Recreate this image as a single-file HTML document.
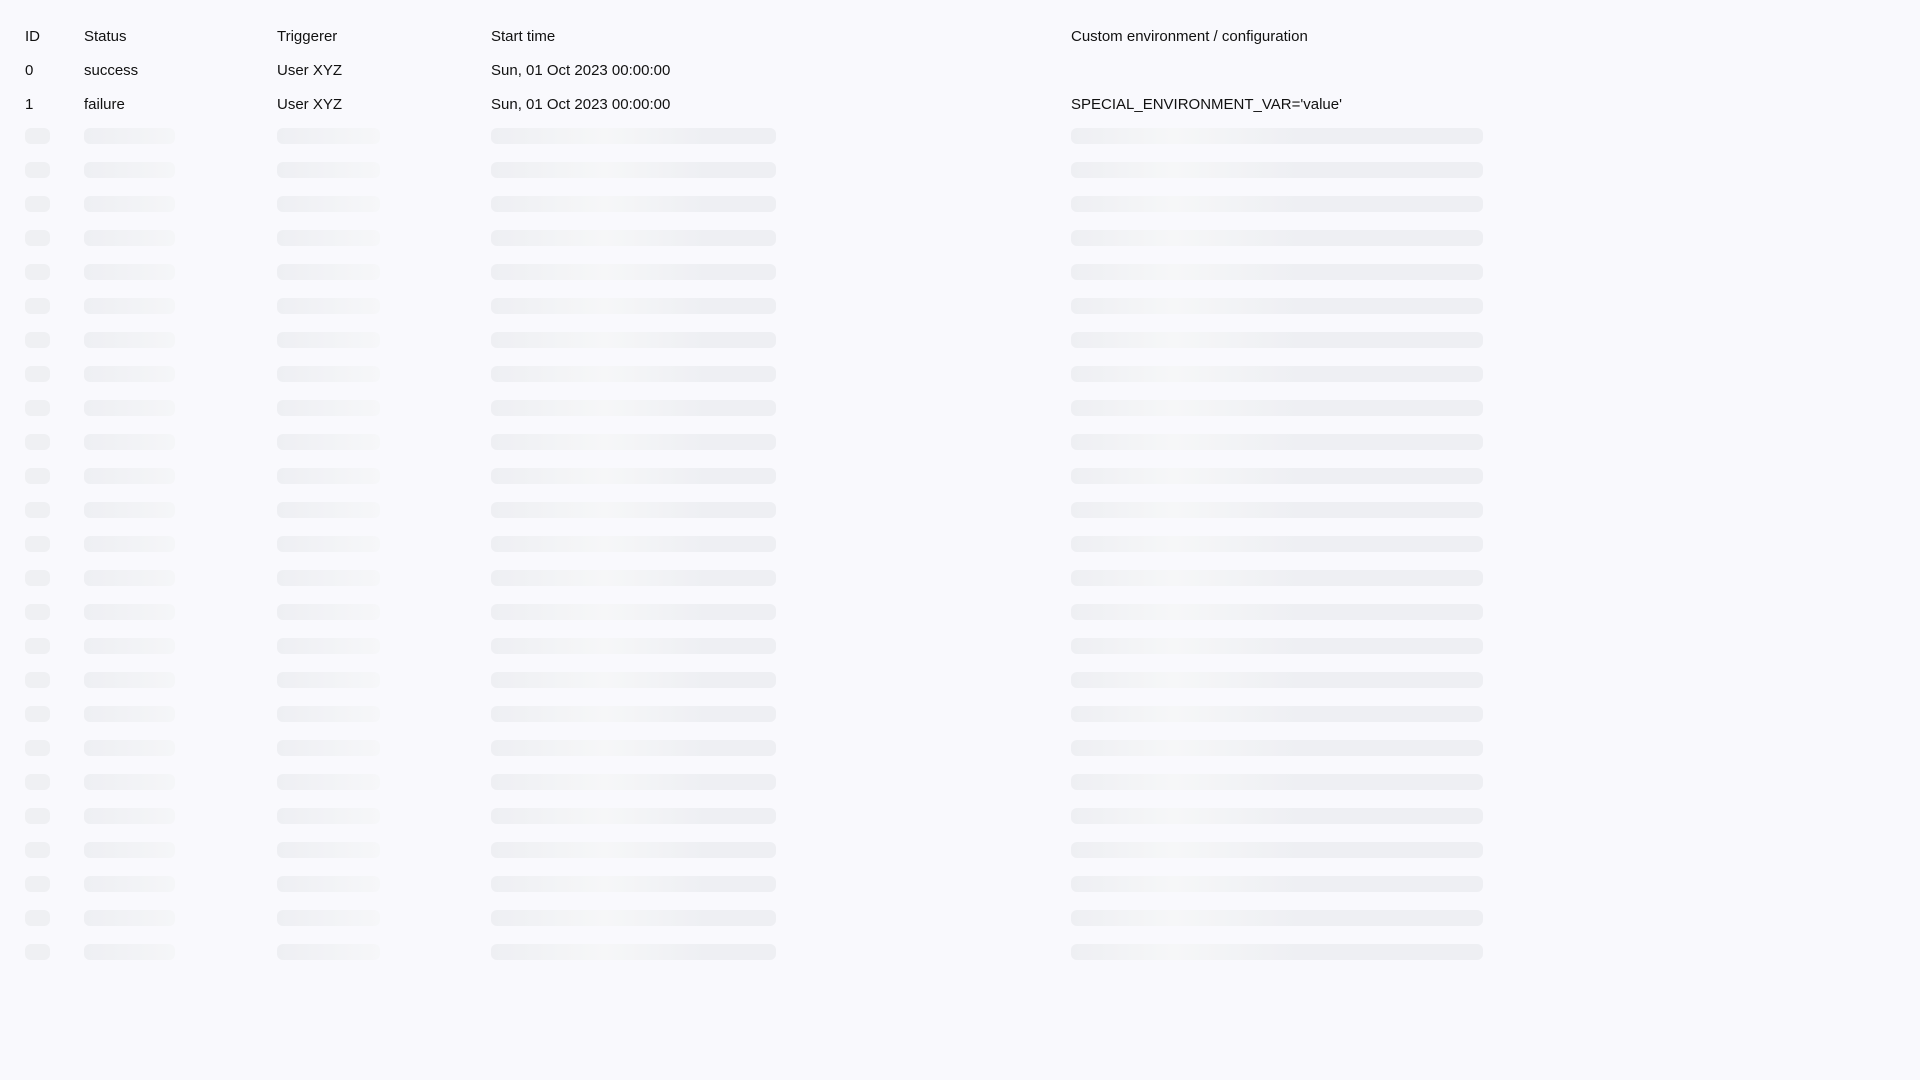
<!DOCTYPE html>
<html><head><style>
html,body{margin:0;padding:0;width:1920px;height:1080px;background:#f9f9fd;overflow:hidden}
body{font-family:"Liberation Sans",sans-serif;font-size:15px;color:#111}
.t{position:absolute;white-space:nowrap;line-height:20px}
.b{position:absolute;height:16px;border-radius:6px}
.c0{left:25px;width:25px;background:#eff0f3}
.c1{left:84px;width:91px;background:linear-gradient(90deg,#eeeff3,#f5f6f8)}
.c2{left:277px;width:103px;background:linear-gradient(90deg,#eeeff3,#f6f7f9)}
.c3{left:491px;width:285px;background:linear-gradient(90deg,#eeeff3 0%,#f6f7f8 40%,#eeeff3 75%,#eeeff3 100%)}
.c4{left:1071px;width:412px;background:linear-gradient(90deg,#eeeff3 0%,#f6f7f8 25%,#eeeff3 55%,#eeeff3 100%)}
</style></head><body>
<div class="t" style="left:25px;top:27px">ID</div>
<div class="t" style="left:84px;top:27px">Status</div>
<div class="t" style="left:277px;top:27px">Triggerer</div>
<div class="t" style="left:491px;top:27px">Start time</div>
<div class="t" style="left:1071px;top:27px">Custom environment / configuration</div>
<div class="t" style="left:25px;top:61px">0</div>
<div class="t" style="left:84px;top:61px">success</div>
<div class="t" style="left:277px;top:61px">User XYZ</div>
<div class="t" style="left:491px;top:61px">Sun, 01 Oct 2023 00:00:00</div>
<div class="t" style="left:25px;top:95px">1</div>
<div class="t" style="left:84px;top:95px">failure</div>
<div class="t" style="left:277px;top:95px">User XYZ</div>
<div class="t" style="left:491px;top:95px">Sun, 01 Oct 2023 00:00:00</div>
<div class="t" style="left:1071px;top:95px">SPECIAL_ENVIRONMENT_VAR='value'</div>
<div id="s"></div>
<script>
var h='';for(var i=0;i<25;i++){var y=128+i*34;for(var c=0;c<5;c++)h+='<div class="b c'+c+'" style="top:'+y+'px"></div>';}
document.getElementById('s').innerHTML=h;
</script>
</body></html>
